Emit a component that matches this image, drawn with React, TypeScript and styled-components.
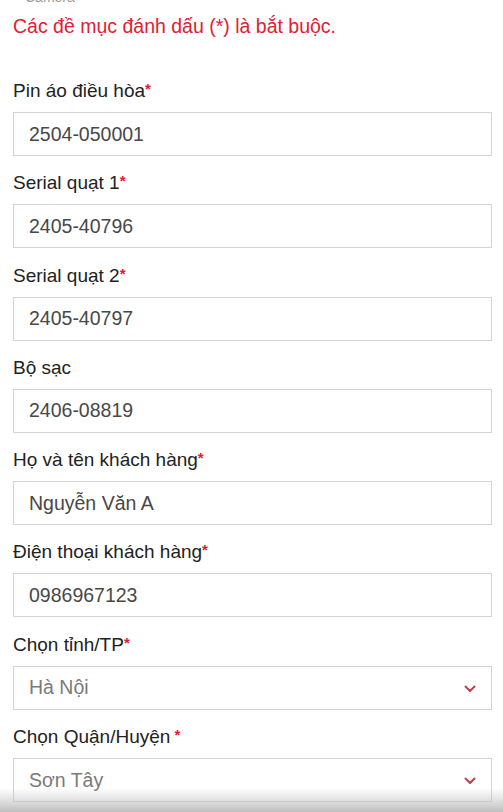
import React from "react";
import styled, { createGlobalStyle } from "styled-components";

const Global = createGlobalStyle`
  html, body { margin: 0; padding: 0; background: #fff; }
  body { font-family: "Liberation Sans", Arial, sans-serif; overflow: hidden; }
  * { box-sizing: border-box; }
`;

const Page = styled.div`
  width: 503px;
  height: 812px;
  overflow: hidden;
  padding: 0 11px 0 13px;
  display: flex;
  flex-direction: column;
`;

const Crumb = styled.div`
  margin: -11px 0 0 12px;
  font-size: 14px;
  line-height: 16px;
  color: #9a9a9a;
`;

const Notice = styled.p`
  margin: 10px 0 0;
  font-size: 19.5px;
  line-height: 22px;
  color: #e3202f;
`;

const Form = styled.div`
  margin-top: 43px;
  display: flex;
  flex-direction: column;
  gap: 16.3px;
`;

const Field = styled.div`
  display: flex;
  flex-direction: column;
  gap: 10px;
`;

const Label = styled.label`
  display: block;
  height: 22px;
  font-size: 19px;
  line-height: 22px;
  color: #222;
`;

const Star = styled.span`
  color: #e8192c;
  font-size: 15px;
  font-weight: bold;
  line-height: 0;
  vertical-align: 3px;
`;

const Box = styled.div<{ $select?: boolean }>`
  height: 44px;
  border: 1px solid #d4d4d4;
  background: #fff;
  display: flex;
  align-items: center;
  justify-content: space-between;
  padding: 0 15px 0 15px;
  font-size: 19.5px;
  color: ${(p) => (p.$select ? "#7a7a7a" : "#484848")};
`;

const Chevron = () => (
  <svg width="12" height="8" viewBox="0 0 12 8" style={{ marginTop: 2 }}>
    <path d="M1.5 1.5 L6 6 L10.5 1.5" fill="none" stroke="#c0404e" strokeWidth="2" strokeLinecap="round" strokeLinejoin="round" />
  </svg>
);

const Shade = styled.div`
  position: fixed;
  left: 0;
  right: 0;
  bottom: 0;
  height: 24px;
  background: linear-gradient(to bottom, rgba(190,190,190,0) 0%, rgba(190,190,190,0.55) 60%, rgba(180,180,180,0.85) 100%);
  pointer-events: none;
`;

type F = { label: string; value: string; req?: boolean; space?: boolean; select?: boolean };

const fields: F[] = [
  { label: "Pin áo điều hòa", value: "2504-050001", req: true },
  { label: "Serial quạt 1", value: "2405-40796", req: true },
  { label: "Serial quạt 2", value: "2405-40797", req: true },
  { label: "Bộ sạc", value: "2406-08819" },
  { label: "Họ và tên khách hàng", value: "Nguyễn Văn A", req: true },
  { label: "Điện thoại khách hàng", value: "0986967123", req: true },
  { label: "Chọn tỉnh/TP", value: "Hà Nội", req: true, select: true },
  { label: "Chọn Quận/Huyện", value: "Sơn Tây", req: true, space: true, select: true },
];

export default function App() {
  return (
    <>
      <Global />
      <Page>
        <Crumb>Camera</Crumb>
        <Notice>Các đề mục đánh dấu (*) là bắt buộc.</Notice>
        <Form>
          {fields.map((f) => (
            <Field key={f.label}>
              <Label>
                {f.label}
                {f.req && <Star>{f.space ? " *" : "*"}</Star>}
              </Label>
              <Box $select={f.select}>
                <span>{f.value}</span>
                {f.select && <Chevron />}
              </Box>
            </Field>
          ))}
        </Form>
      </Page>
      <Shade />
    </>
  );
}
